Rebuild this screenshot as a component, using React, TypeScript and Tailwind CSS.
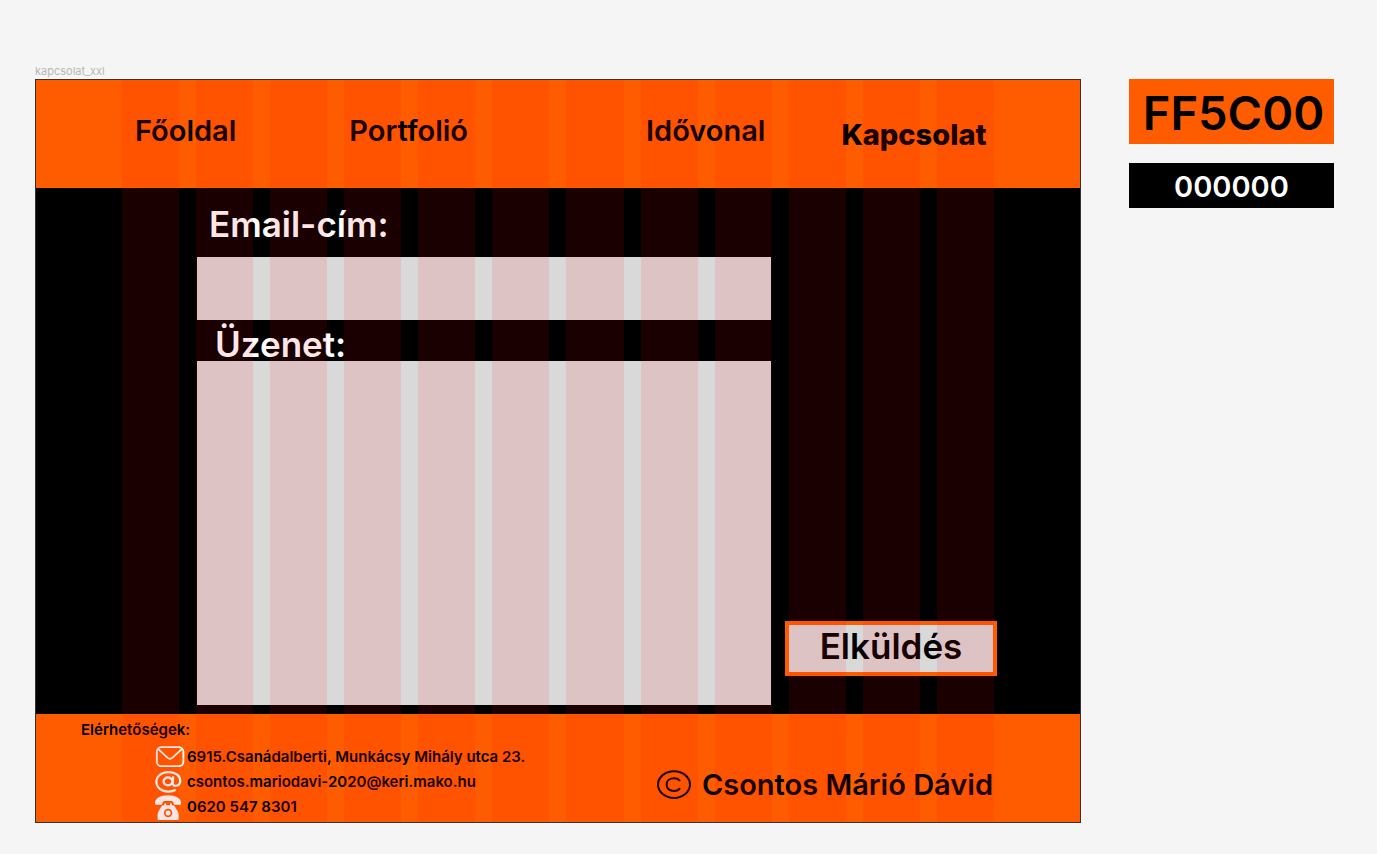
import React from "react";

const columns = Array.from({ length: 12 }, (_, i) => i);

function ColumnGuides() {
  return (
    <div
      aria-hidden="true"
      className="pointer-events-none absolute inset-0 grid grid-cols-12 gap-[17px] px-[86px]"
    >
      {columns.map((c) => (
        <div key={c} className="bg-[#ff0000]/10" />
      ))}
    </div>
  );
}

function EnvelopeIcon() {
  return (
    <svg width="30" height="24" viewBox="0 0 30 24" fill="none" stroke="white" strokeWidth="1.8" aria-hidden="true">
      <rect x="1.8" y="1.2" width="26.6" height="19" rx="4.6" />
      <path d="M3 2.8 L12.4 11.6 Q15 13.8 17.6 11.6 L27 2.8" />
    </svg>
  );
}

function AtIcon() {
  return (
    <svg width="30" height="24" viewBox="0 0 30 24" fill="none" stroke="white" strokeWidth="2.2" aria-hidden="true">
      <ellipse cx="13" cy="10.4" rx="4.4" ry="3.9" strokeWidth="2.4" />
      <path d="M18.2 5.4 L17.8 12.2 Q17.8 14.8 20.4 14.8 C23.4 14.8 25.2 12.8 25.2 9.8 C25.2 4.6 20.4 1.1 13.8 1.1 C6.6 1.1 1.4 5 1.4 10.8 C1.4 16.8 6.6 20.6 13.4 20.6 Q17.4 20.6 20.8 18.8" />
    </svg>
  );
}

function PhoneIcon() {
  return (
    <svg width="30" height="25" viewBox="0 0 30 25" fill="white" aria-hidden="true">
      <path d="M0 8 C0 3 5.6 0.2 13 0.2 C20.4 0.2 26 3 26 8 C26 9.4 25.4 9.8 24.4 9.8 L20.4 9.8 C19 9.8 18.6 9 18.4 7.4 Q18.2 6 16.6 5.9 L9.4 5.9 Q7.8 6 7.6 7.4 C7.4 9 7 9.8 5.6 9.8 L1.6 9.8 C0.6 9.8 0 9.4 0 8 Z" />
      <path
        fillRule="evenodd"
        d="M9.4 8.6 H11.2 V10.2 H15 V8.6 H16.8 V10.2 H18 Q19 10.2 19.6 11.2 L22.6 16 Q23.6 17.6 23.6 19.4 V24 Q23.6 25 22.6 25 H3.6 Q2.6 25 2.6 24 V19.4 Q2.6 17.6 3.6 16 L6.6 11.2 Q7.2 10.2 8.2 10.2 H9.4 Z M13.1 13.8 A4.2 4.2 0 1 0 13.1 22.2 A4.2 4.2 0 1 0 13.1 13.8 Z"
      />
      <circle cx="13.1" cy="18" r="2.5" />
    </svg>
  );
}

function CopyrightIcon() {
  return (
    <svg width="36" height="30" viewBox="0 0 36 30" fill="none" stroke="black" strokeWidth="2" aria-hidden="true">
      <ellipse cx="17" cy="14.6" rx="16" ry="13.4" />
      <path d="M23 11 C21.6 9 19.6 8.2 17 8.2 C12.6 8.2 9.6 10.8 9.6 14.6 C9.6 18.4 12.6 21 17 21 C19.6 21 21.6 20.2 23 18.2" />
    </svg>
  );
}

const contacts = [
  { icon: <EnvelopeIcon />, text: "6915.Csanádalberti, Munkácsy Mihály utca 23." },
  { icon: <AtIcon />, text: "csontos.mariodavi-2020@keri.mako.hu" },
  { icon: <PhoneIcon />, text: "0620 547 8301" },
];

export default function App() {
  return (
    <div className="flex min-h-screen items-start gap-12 bg-[#f5f5f5] pt-16 pr-[43px] pb-8 pl-[35px] font-['Inter',sans-serif] text-black">
      <section className="min-w-0 flex-1">
        <h2 className="h-[15px] text-[11px] leading-[15px] text-[#b8b8b8]">kapcsolat_xxl</h2>
        <div className="relative border border-[#333333] bg-black">
          <header className="h-[108px] bg-[#ff5c00]">
            <nav className="flex h-full items-center pb-[7px] pl-[99px] text-[29px] leading-9 font-semibold">
              <a href="#fooldal" className="mr-[113px]">Főoldal</a>
              <a href="#portfolio" className="mr-[178px]">Portfolió</a>
              <a href="#idovonal" className="mr-[76px]">Idővonal</a>
              <a href="#kapcsolat" aria-current="page" className="pt-2 font-extrabold">Kapcsolat</a>
            </nav>
          </header>

          <main>
            <form className="flex items-end gap-[14px] pr-[83px] pb-[9px] pl-[161px]" onSubmit={(e) => e.preventDefault()}>
              <div className="flex flex-1 flex-col">
                <label htmlFor="email" className="pt-5 pb-4 pl-3 text-[35px] leading-[33px] font-semibold text-white">
                  Email-cím:
                </label>
                <input id="email" type="email" className="h-[63px] w-full bg-[#d9d9d9] px-3 text-2xl outline-none" />
                <label htmlFor="message" className="pt-2 pl-[18px] text-[35px] leading-[33px] font-semibold text-white">
                  Üzenet:
                </label>
                <textarea id="message" className="h-[344px] w-full resize-none bg-[#d9d9d9] p-3 text-2xl outline-none" />
              </div>
              <button
                type="submit"
                className="mb-[29px] h-[55px] w-[212px] border-4 border-[#ff5c00] bg-[#d9d9d9] pb-1 text-[35px] leading-[43px] font-semibold"
              >
                Elküldés
              </button>
            </form>
          </main>

          <footer className="flex h-[108px] justify-between bg-[#ff5c00] pr-[87px] pl-[45px] font-semibold">
            <div className="text-[15px]">
              <h3 className="leading-[31px]">Elérhetőségek:</h3>
              <ul className="pl-[74px]">
                {contacts.map((c) => (
                  <li key={c.text} className="flex h-[25px] items-center gap-0.5">
                    {c.icon}
                    <span>{c.text}</span>
                  </li>
                ))}
              </ul>
            </div>
            <p className="flex items-center gap-[9px] pt-[34px] text-[29px] leading-9">
              <CopyrightIcon />
              Csontos Márió Dávid
            </p>
          </footer>

          <ColumnGuides />
        </div>
      </section>

      <aside className="mt-[15px] flex w-[205px] flex-col gap-[19px] text-center font-semibold">
        <div className="h-[65px] bg-[#ff5c00] pl-1 text-[47px] leading-[67px]">FF5C00</div>
        <div className="h-[45px] bg-black text-[29px] leading-[47px] text-white">000000</div>
      </aside>
    </div>
  );
}
